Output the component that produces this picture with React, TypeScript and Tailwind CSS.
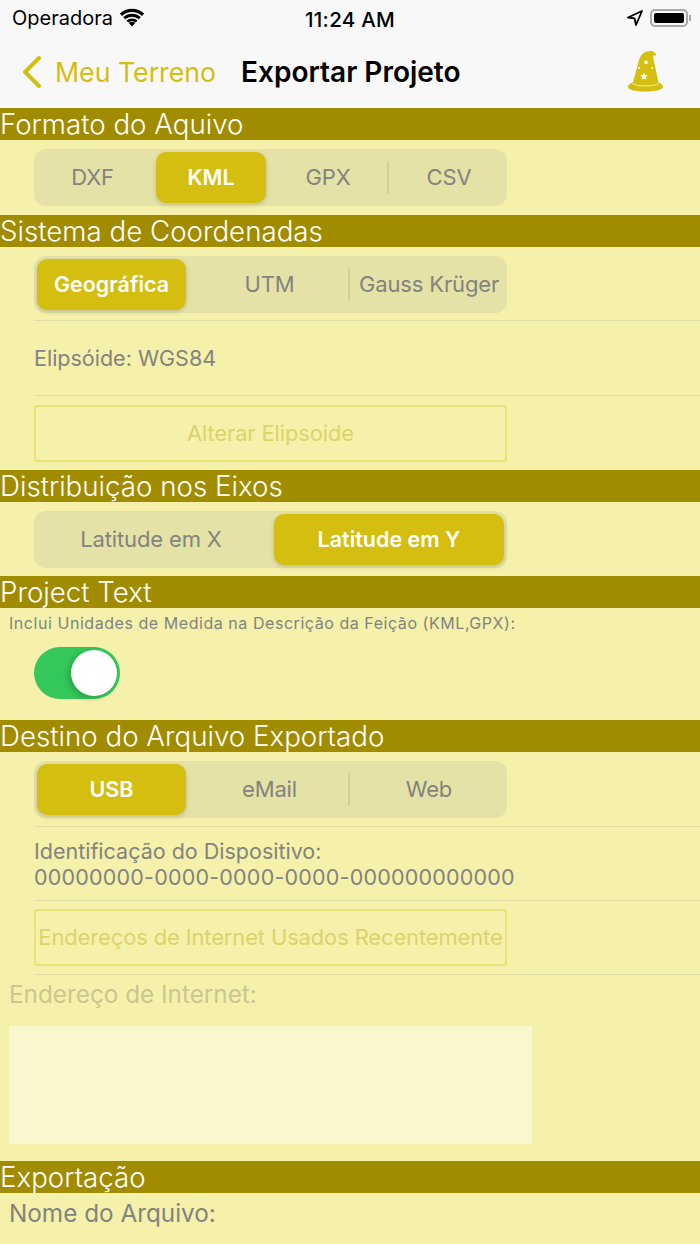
import React from "react";

const font = { fontFamily: "Inter, 'Liberation Sans', sans-serif" };

function Header({ children }: { children: React.ReactNode }) {
  return (
    <div className="h-8 bg-[#a18c00] text-white text-[27.700px] leading-[33px] font-light whitespace-nowrap">
      {children}
    </div>
  );
}

function Segmented({
  items,
  active,
  widths,
  itemClass = [],
  divider,
}: {
  items: string[];
  active: number;
  widths: number[];
  itemClass?: string[];
  divider?: number;
}) {
  return (
    <div className="relative ml-[34px] w-[473px] h-[57px] rounded-[12px] bg-[#e4e2a6] flex items-center px-[3px]">
      {items.map((t, i) => (
        <div
          key={t}
          style={{ width: widths[i] }}
          className={
            i === active
              ? "h-[51px] shrink-0 rounded-[10px] bg-[#d4be10] text-white font-semibold text-[21.500px] flex items-center justify-center shadow-[0_2px_5px_rgba(0,0,0,0.15)]"
              : "h-[51px] shrink-0 text-[#83837f] text-[22px] tracking-[-0.15px] flex items-center justify-center whitespace-nowrap " +
                (itemClass[i] ?? "")
          }
        >
          {t}
        </div>
      ))}
      {divider !== undefined && (
        <div style={{ left: divider }} className="absolute top-[12px] h-[33px] w-[2px] bg-[#d2d09a]" />
      )}
    </div>
  );
}

function Rule() {
  return <div className="ml-[34px] h-px bg-[#e0dea2]" />;
}

function OutlineButton({ children }: { children: React.ReactNode }) {
  return (
    <div className="ml-[34px] w-[473px] h-[57px] rounded-[3px] border-2 border-[#ebe17a] flex items-center justify-center text-[#dcd36c] text-[22px] tracking-[-0.15px] whitespace-nowrap">
      {children}
    </div>
  );
}

function Hat() {
  return (
    <svg width="36" height="42" viewBox="0 0 36 42">
      <path d="M6 32.500L12 10C14 4 18 1 23 1c3 0 6 2 6.500 5-2-1.500-3.500-1-3.500 1l5.500 25.500c2.500 1 4.500 2 4.500 4.500 0 3-9 4.500-18 4.500S1 40 1 37c0-2.500 2-3.500 5-4.500z" fill="#d4be10" />
      <path d="M5.500 33.500c4 3.200 22 3.200 26 0" fill="none" stroke="#f5f0b0" strokeWidth="1" />
      <path d="M17 22.500l1.100 2.500 2.700.2-2.100 1.800.7 2.700-2.400-1.400-2.400 1.400.7-2.700-2.100-1.800 2.700-.2z" fill="#fff" />
      <path d="M19 9.500l.8 1.700 1.800.2-1.300 1.200.4 1.800-1.700-.9-1.700.9.400-1.800-1.300-1.200 1.800-.2z" fill="#fff" />
      <circle cx="12" cy="18" r="1" fill="#fff" />
      <circle cx="25" cy="18" r="1" fill="#fff" />
    </svg>
  );
}

export default function App() {
  return (
    <div style={font} className="w-[700px] h-[1244px] overflow-hidden bg-[#f5f1aa]">
      <div className="h-[108px] bg-[#f8f8f8] flex flex-col">
        <div className="h-[36px] relative flex items-center justify-between pl-3 pr-[9px]">
          <div className="flex items-center gap-[6px] text-[20px] text-black">
            <span>Operadora</span>
            <svg width="26" height="20" viewBox="0 0 26 20">
              <path d="M13 18.500l3.200-3.500c-1.800-1.600-4.600-1.600-6.400 0zM7.400 12.500l2 2.100a5.400 5.400 0 0 1 7.200 0l2-2.100a8.500 8.500 0 0 0-11.200 0zM4.200 9.100l2 2.200a10 10 0 0 1 13.600 0l2-2.200a13 13 0 0 0-17.600 0zM.8 5.500l2.300 2.400a14.500 14.500 0 0 1 19.800 0l2.300-2.400a18 18 0 0 0-24.400 0z" fill="#000" />
            </svg>
          </div>
          <span className="absolute left-[305px] top-[5px] text-[20.500px] tracking-[0.3px] font-medium text-black whitespace-nowrap">11:24 AM</span>
          <div className="flex items-center gap-[7px]">
            <svg width="16" height="16" viewBox="0 0 16 16">
              <path d="M15 1L1 7.500l6.500.8L9 15z" fill="none" stroke="#000" strokeWidth="1.800" strokeLinejoin="round" />
            </svg>
            <div className="relative w-[38px] h-[18px] rounded-[5px] border-2 border-[#a8a8a8] p-[2px]">
              <div className="w-full h-full rounded-[2px] bg-black" />
            </div>
            <div className="w-[2px] h-[6px] bg-[#a8a8a8] -ml-[6px]" />
          </div>
        </div>
        <div className="flex-1 relative flex items-center">
          <svg className="ml-[21px]" width="22" height="34" viewBox="0 0 22 34">
            <path d="M18 3L4 17l14 14" fill="none" stroke="#d4be10" strokeWidth="4" strokeLinecap="round" strokeLinejoin="round" />
          </svg>
          <span className="ml-[12px] text-[#d4be10] text-[26.700px] whitespace-nowrap">Meu Terreno</span>
          <span className="ml-[25px] text-black text-[28px] font-semibold whitespace-nowrap">Exportar Projeto</span>
          <div className="absolute left-[627px] top-[14px]">
            <Hat />
          </div>
        </div>
      </div>

      <Header>Formato do Aquivo</Header>
      <div className="h-[75px] pt-[9px]">
        <Segmented
          items={["DXF", "KML", "GPX", "CSV"]}
          active={1}
          widths={[119, 110, 124, 118]}
          itemClass={["pr-[8px]"]}
          divider={353}
        />
      </div>

      <Header>Sistema de Coordenadas</Header>
      <div className="h-[223px] pt-[9px]">
        <Segmented items={["Geográfica", "UTM", "Gauss Krüger"]} active={0} widths={[149, 167, 152]} divider={314} />
        <div className="mt-[7px]"><Rule /></div>
        <div className="ml-[34px] h-[74px] flex items-center text-[#83837f] text-[21.500px]">Elipsóide: WGS84</div>
        <Rule />
        <div className="mt-[9px]">
          <OutlineButton>Alterar Elipsoide</OutlineButton>
        </div>
      </div>

      <Header>Distribuição nos Eixos</Header>
      <div className="h-[74px] pt-[9px]">
        <Segmented
          items={["Latitude em X", "Latitude em Y"]}
          active={1}
          widths={[237, 230]}
          itemClass={["pr-[9px]"]}
        />
      </div>

      <Header>Project Text</Header>
      <div className="h-[112px]">
        <div className="pl-[9px] pt-[5px] h-[39px] text-[16px] leading-[20px] text-[#83837f] whitespace-nowrap tracking-[0.55px]">
          Inclui Unidades de Medida na Descrição da Feição (KML,GPX):
        </div>
        <div className="ml-[34px] w-[86px] h-[52px] rounded-full bg-[#34c85a] flex items-center justify-end pr-[3px]">
          <div className="w-[46px] h-[46px] rounded-full bg-white shadow-[-3px_2px_6px_rgba(0,0,0,0.2)]" />
        </div>
      </div>

      <Header>Destino do Arquivo Exportado</Header>
      <div className="h-[409px] pt-[9px]">
        <Segmented items={["USB", "eMail", "Web"]} active={0} widths={[149, 167, 152]} divider={314} />
        <div className="mt-[8px]"><Rule /></div>
        <div className="ml-[34px] h-[73px] flex flex-col justify-center text-[#83837f] text-[21.500px] leading-[26px] whitespace-nowrap">
          <span>Identificação do Dispositivo:</span>
          <span className="tracking-[0.2px]">00000000-0000-0000-0000-000000000000</span>
        </div>
        <Rule />
        <div className="mt-[8px]">
          <OutlineButton>Endereços de Internet Usados Recentemente</OutlineButton>
        </div>
        <div className="mt-[8px]"><Rule /></div>
        <div className="pl-[9px] h-[38px] pt-[3px] text-[#c9c78f] text-[24.300px] leading-[32px] whitespace-nowrap">Endereço de Internet:</div>
        <div className="mt-[13px] ml-[9px] w-[523px] h-[118px] bg-[#f9f7ce]" />
      </div>

      <Header>Exportação</Header>
      <div className="pl-[9px] pt-[4px] text-[#83837f] text-[24.300px] leading-[32px] whitespace-nowrap">Nome do Arquivo:</div>
    </div>
  );
}
